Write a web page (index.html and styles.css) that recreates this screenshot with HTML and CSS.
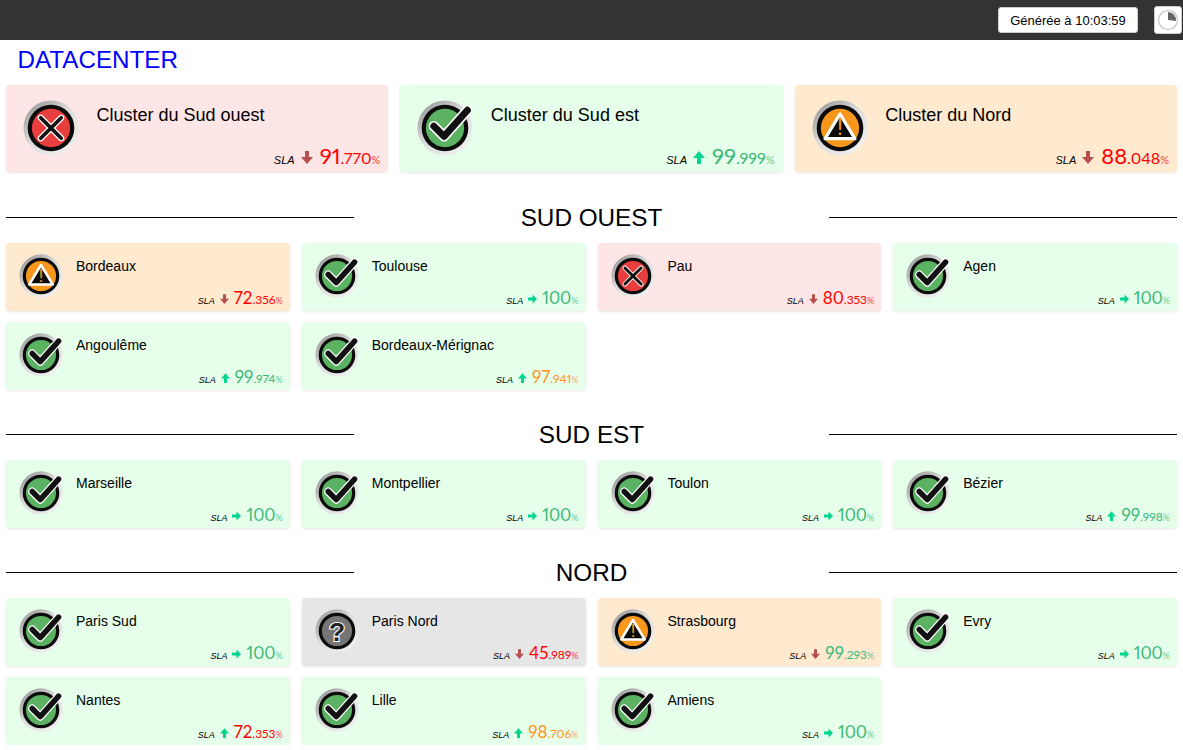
FILE: index.html
```html
<!DOCTYPE html>
<html lang="fr">
<head>
    <meta charset="UTF-8">
    <meta name="viewport" content="width=device-width, initial-scale=1.0">
    <title>Datacenter</title>
    <link rel="stylesheet" href="styles.css">
</head>
<body>
    <svg class="defs" aria-hidden="true">
        <defs>
            <linearGradient id="ring" x1="0.15" y1="0.1" x2="0.85" y2="0.9">
                <stop offset="0" stop-color="#a0a0a0"/>
                <stop offset="0.45" stop-color="#dcdcdc"/>
                <stop offset="1" stop-color="#efefef"/>
            </linearGradient>
            <symbol id="ok" viewBox="0 0 60 60">
                <circle cx="30" cy="30" r="29.5" fill="url(#ring)"/>
                <circle cx="30" cy="30" r="25" fill="#0c0c0c"/>
                <circle cx="30" cy="30" r="20.5" fill="#5cb263"/>
                <path d="M18 28 L29 39 L54 11" class="tick-out"/>
                <path d="M18 28 L29 39 L54 11" class="tick-in"/>
            </symbol>
            <symbol id="ko" viewBox="0 0 60 60">
                <circle cx="30" cy="30" r="29.5" fill="url(#ring)"/>
                <circle cx="30" cy="30" r="25" fill="#0c0c0c"/>
                <circle cx="30" cy="30" r="20.5" fill="#e83e3e"/>
                <path d="M19 19 L41 41 M41 19 L19 41" class="cross-out"/>
                <path d="M19 19 L41 41 M41 19 L19 41" class="cross-in"/>
            </symbol>
            <symbol id="warn" viewBox="0 0 60 60">
                <circle cx="30" cy="30" r="29.5" fill="url(#ring)"/>
                <circle cx="30" cy="30" r="25" fill="#0c0c0c"/>
                <circle cx="30" cy="30" r="20.5" fill="#f7981d"/>
                <path d="M30 15 L46 41.5 L14 41.5 Z" fill="#0c0c0c" stroke="#fff" stroke-width="3.5" stroke-linejoin="round"/>
                <text x="30" y="38" class="warn-mark">!</text>
            </symbol>
            <symbol id="unknown" viewBox="0 0 60 60">
                <circle cx="30" cy="30" r="29.5" fill="url(#ring)"/>
                <circle cx="30" cy="30" r="25" fill="#0c0c0c"/>
                <circle cx="30" cy="30" r="20.5" fill="#767676"/>
                <text x="30" y="43" class="help-mark">?</text>
            </symbol>
            <symbol id="down" viewBox="0 0 12 13"><path d="M4 0 H8 V6 H12 L6 13 L0 6 H4 Z"/></symbol>
            <symbol id="up" viewBox="0 0 12 13"><path d="M4 13 H8 V7 H12 L6 0 L0 7 H4 Z"/></symbol>
            <symbol id="right" viewBox="0 0 12 12"><path d="M0 4 H6 V0 L12 6 L6 12 V8 H0 Z"/></symbol>
        </defs>
    </svg>

    <header class="topbar">
        <button class="generated">Générée à 10:03:59</button>
        <button class="timer" aria-label="Minuteur">
            <svg viewBox="0 0 24 24" width="24" height="24">
                <circle cx="12" cy="12" r="9.5" fill="#fff" stroke="#c4c4c4" stroke-width="1.2"/>
                <path d="M12 12 V4 A8 8 0 0 1 20 13 Z" fill="#666"/>
            </svg>
        </button>
    </header>

    <main class="page">
        <h1 class="page-title">DATACENTER</h1>

        <div class="clusters">
            <div class="card card-big ko">
                <svg class="state"><use href="#ko"/></svg>
                <div class="card-body">
                    <div class="name">Cluster du Sud ouest</div>
                    <div class="sla"><span class="sla-label">SLA</span><svg class="arrow arrow-down"><use href="#down"/></svg><span class="value red"><b>91</b>.770<i>%</i></span></div>
                </div>
            </div>
            <div class="card card-big ok">
                <svg class="state"><use href="#ok"/></svg>
                <div class="card-body">
                    <div class="name">Cluster du Sud est</div>
                    <div class="sla"><span class="sla-label">SLA</span><svg class="arrow arrow-up"><use href="#up"/></svg><span class="value green"><b>99</b>.999<i>%</i></span></div>
                </div>
            </div>
            <div class="card card-big warn">
                <svg class="state"><use href="#warn"/></svg>
                <div class="card-body">
                    <div class="name">Cluster du Nord</div>
                    <div class="sla"><span class="sla-label">SLA</span><svg class="arrow arrow-down"><use href="#down"/></svg><span class="value red"><b>88</b>.048<i>%</i></span></div>
                </div>
            </div>
        </div>

        <h2 class="section"><span>SUD OUEST</span></h2>
        <div class="sites">
            <div class="card warn">
                <svg class="state"><use href="#warn"/></svg>
                <div class="card-body">
                    <div class="name">Bordeaux</div>
                    <div class="sla"><span class="sla-label">SLA</span><svg class="arrow arrow-down"><use href="#down"/></svg><span class="value red"><b>72</b>.356<i>%</i></span></div>
                </div>
            </div>
            <div class="card ok">
                <svg class="state"><use href="#ok"/></svg>
                <div class="card-body">
                    <div class="name">Toulouse</div>
                    <div class="sla"><span class="sla-label">SLA</span><svg class="arrow arrow-up"><use href="#right"/></svg><span class="value green"><b>100</b><i>%</i></span></div>
                </div>
            </div>
            <div class="card ko">
                <svg class="state"><use href="#ko"/></svg>
                <div class="card-body">
                    <div class="name">Pau</div>
                    <div class="sla"><span class="sla-label">SLA</span><svg class="arrow arrow-down"><use href="#down"/></svg><span class="value red"><b>80</b>.353<i>%</i></span></div>
                </div>
            </div>
            <div class="card ok">
                <svg class="state"><use href="#ok"/></svg>
                <div class="card-body">
                    <div class="name">Agen</div>
                    <div class="sla"><span class="sla-label">SLA</span><svg class="arrow arrow-up"><use href="#right"/></svg><span class="value green"><b>100</b><i>%</i></span></div>
                </div>
            </div>
            <div class="card ok">
                <svg class="state"><use href="#ok"/></svg>
                <div class="card-body">
                    <div class="name">Angoulême</div>
                    <div class="sla"><span class="sla-label">SLA</span><svg class="arrow arrow-up"><use href="#up"/></svg><span class="value green"><b>99</b>.974<i>%</i></span></div>
                </div>
            </div>
            <div class="card ok">
                <svg class="state"><use href="#ok"/></svg>
                <div class="card-body">
                    <div class="name">Bordeaux-Mérignac</div>
                    <div class="sla"><span class="sla-label">SLA</span><svg class="arrow arrow-up"><use href="#up"/></svg><span class="value orange"><b>97</b>.941<i>%</i></span></div>
                </div>
            </div>
        </div>

        <h2 class="section"><span>SUD EST</span></h2>
        <div class="sites">
            <div class="card ok">
                <svg class="state"><use href="#ok"/></svg>
                <div class="card-body">
                    <div class="name">Marseille</div>
                    <div class="sla"><span class="sla-label">SLA</span><svg class="arrow arrow-up"><use href="#right"/></svg><span class="value green"><b>100</b><i>%</i></span></div>
                </div>
            </div>
            <div class="card ok">
                <svg class="state"><use href="#ok"/></svg>
                <div class="card-body">
                    <div class="name">Montpellier</div>
                    <div class="sla"><span class="sla-label">SLA</span><svg class="arrow arrow-up"><use href="#right"/></svg><span class="value green"><b>100</b><i>%</i></span></div>
                </div>
            </div>
            <div class="card ok">
                <svg class="state"><use href="#ok"/></svg>
                <div class="card-body">
                    <div class="name">Toulon</div>
                    <div class="sla"><span class="sla-label">SLA</span><svg class="arrow arrow-up"><use href="#right"/></svg><span class="value green"><b>100</b><i>%</i></span></div>
                </div>
            </div>
            <div class="card ok">
                <svg class="state"><use href="#ok"/></svg>
                <div class="card-body">
                    <div class="name">Bézier</div>
                    <div class="sla"><span class="sla-label">SLA</span><svg class="arrow arrow-up"><use href="#up"/></svg><span class="value green"><b>99</b>.998<i>%</i></span></div>
                </div>
            </div>
        </div>

        <h2 class="section"><span>NORD</span></h2>
        <div class="sites">
            <div class="card ok">
                <svg class="state"><use href="#ok"/></svg>
                <div class="card-body">
                    <div class="name">Paris Sud</div>
                    <div class="sla"><span class="sla-label">SLA</span><svg class="arrow arrow-up"><use href="#right"/></svg><span class="value green"><b>100</b><i>%</i></span></div>
                </div>
            </div>
            <div class="card unknown">
                <svg class="state"><use href="#unknown"/></svg>
                <div class="card-body">
                    <div class="name">Paris Nord</div>
                    <div class="sla"><span class="sla-label">SLA</span><svg class="arrow arrow-down"><use href="#down"/></svg><span class="value red"><b>45</b>.989<i>%</i></span></div>
                </div>
            </div>
            <div class="card warn">
                <svg class="state"><use href="#warn"/></svg>
                <div class="card-body">
                    <div class="name">Strasbourg</div>
                    <div class="sla"><span class="sla-label">SLA</span><svg class="arrow arrow-down"><use href="#down"/></svg><span class="value green"><b>99</b>.293<i>%</i></span></div>
                </div>
            </div>
            <div class="card ok">
                <svg class="state"><use href="#ok"/></svg>
                <div class="card-body">
                    <div class="name">Evry</div>
                    <div class="sla"><span class="sla-label">SLA</span><svg class="arrow arrow-up"><use href="#right"/></svg><span class="value green"><b>100</b><i>%</i></span></div>
                </div>
            </div>
            <div class="card ok">
                <svg class="state"><use href="#ok"/></svg>
                <div class="card-body">
                    <div class="name">Nantes</div>
                    <div class="sla"><span class="sla-label">SLA</span><svg class="arrow arrow-up"><use href="#up"/></svg><span class="value red"><b>72</b>.353<i>%</i></span></div>
                </div>
            </div>
            <div class="card ok">
                <svg class="state"><use href="#ok"/></svg>
                <div class="card-body">
                    <div class="name">Lille</div>
                    <div class="sla"><span class="sla-label">SLA</span><svg class="arrow arrow-up"><use href="#up"/></svg><span class="value orange"><b>98</b>.706<i>%</i></span></div>
                </div>
            </div>
            <div class="card ok">
                <svg class="state"><use href="#ok"/></svg>
                <div class="card-body">
                    <div class="name">Amiens</div>
                    <div class="sla"><span class="sla-label">SLA</span><svg class="arrow arrow-up"><use href="#right"/></svg><span class="value green"><b>100</b><i>%</i></span></div>
                </div>
            </div>
        </div>
    </main>
</body>
</html>
```

FILE: styles.css
```css
body {
    margin: 0;
    font-family: "Liberation Sans", Arial, sans-serif;
    color: #000;
    background-color: #fff;
}
.defs {
    display: block;
    width: 0;
    height: 0;
}

/* top bar */
.topbar {
    display: flex;
    justify-content: flex-end;
    align-items: center;
    height: 40px;
    padding-right: 1px;
    background-color: #333;
}
.generated {
    width: 140px;
    height: 26px;
    margin-right: 16px;
    padding: 0;
    font: 13px "Liberation Sans", Arial, sans-serif;
    color: #000;
    background-color: #fff;
    border: 1px solid #ccc;
    border-radius: 3px;
}
.timer {
    display: flex;
    align-items: center;
    justify-content: center;
    width: 28px;
    height: 28px;
    padding: 0;
    background-color: #fff;
    border: 1px solid #ccc;
    border-radius: 3px;
}

.page {
    padding: 0 6px;
}
.page-title {
    height: 45px;
    margin: 0;
    padding-left: 11.5px;
    font-size: 24.2px;
    font-weight: normal;
    line-height: 40px;
    color: #0000ff;
}

/* grids */
.clusters {
    display: grid;
    grid-template-columns: repeat(3, 1fr);
    gap: 12px;
}
.sites {
    display: grid;
    grid-template-columns: repeat(4, 1fr);
    gap: 11px 12px;
}

.section {
    display: flex;
    align-items: center;
    height: 28px;
    margin: 31px 0 12px;
    font-size: 24.3px;
    font-weight: normal;
    line-height: 28px;
}
.sites + .section {
    margin-top: 30px;
}
.section::before,
.section::after {
    content: "";
    flex: 1;
    border-top: 1px solid #000;
}
.section span {
    width: 475px;
    padding-top: 2px;
    text-align: center;
}

/* cards */
.card {
    display: flex;
    height: 68px;
    box-sizing: border-box;
    padding: 11px 7px 3px 13px;
    border-radius: 4px;
    box-shadow: 0 1px 3px rgba(0, 0, 0, 0.1);
}
.card-big {
    height: 87px;
    padding: 15px 8px 3px 17px;
}
.ok { background-color: #e6ffea; }
.ko { background-color: #ffe6e6; }
.warn { background-color: #ffe9cf; }
.unknown { background-color: #e6e6e6; }

.state {
    flex: none;
    width: 44px;
    height: 44px;
    overflow: visible;
}
.card-big .state {
    width: 56px;
    height: 56px;
}
.card-body {
    display: flex;
    flex: 1;
    flex-direction: column;
    justify-content: space-between;
    margin-left: 13px;
}
.card-big .card-body {
    margin-left: 18px;
}
.name {
    font-size: 14px;
    line-height: 24px;
}
.card-big .name {
    margin-left: -0.5px;
    font-size: 18px;
    line-height: 30px;
}

.sla {
    display: flex;
    justify-content: flex-end;
    align-items: baseline;
}
.sla-label {
    margin-right: 5px;
    font-size: 9px;
    font-style: italic;
}
.card-big .sla-label {
    font-size: 11px;
    margin-right: 6px;
}
.arrow {
    width: 9px;
    height: 10px;
    margin-right: 5px;
    margin-bottom: -1px;
}
.card-big .arrow {
    width: 12px;
    height: 13px;
    margin-right: 7px;
    margin-bottom: -2px;
}
.arrow-down { fill: #b5504f; }
.arrow-up { fill: #00d68f; }

.value {
    font-family: Lato, sans-serif;
    font-size: 12px;
    font-variant-numeric: proportional-nums;
}
.value b {
    font-size: 17px;
    font-weight: normal;
}
.value i {
    font-size: 9px;
    font-style: normal;
    opacity: 0.75;
}
.card-big .value { font-size: 16px; }
.card-big .value b { font-size: 22px; }
.card-big .value i { font-size: 11px; }
.red { color: #ff0000; }
.green { color: #3cb878; }
.orange { color: #ff9419; }

/* state icon details */
.tick-out {
    fill: none;
    stroke: #fff;
    stroke-width: 11;
    stroke-linecap: round;
    stroke-linejoin: round;
}
.tick-in {
    fill: none;
    stroke: #111;
    stroke-width: 7.5;
    stroke-linecap: round;
    stroke-linejoin: round;
}
.cross-out {
    fill: none;
    stroke: #fff;
    stroke-width: 6.5;
    stroke-linecap: round;
}
.cross-in {
    fill: none;
    stroke: #111;
    stroke-width: 4;
    stroke-linecap: round;
}
.warn-mark {
    font: 25px "Liberation Sans", Arial, sans-serif;
    text-anchor: middle;
    fill: #f7981d;
}
.help-mark {
    font: bold 36px "Liberation Sans", Arial, sans-serif;
    text-anchor: middle;
    fill: #222;
    stroke: #fff;
    stroke-width: 3;
    paint-order: stroke;
}
```
